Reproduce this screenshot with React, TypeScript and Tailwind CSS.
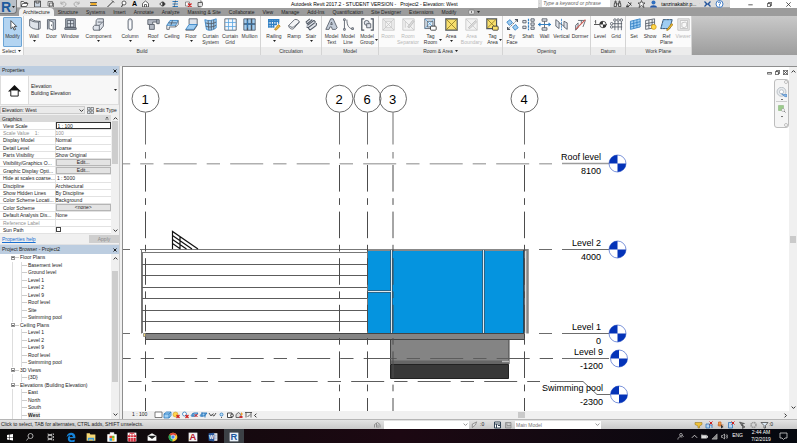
import { ReactNode, useState } from 'react'
import { clsx } from 'clsx'

const tabs = [
  'Architecture', 'Structure', 'Systems', 'Insert', 'Annotate', 'Analyze', 'Massing & Site', 'Collaborate',
  'View', 'Manage', 'Add-Ins', 'Quantification', 'Site Designer', 'Extensions', 'Modify',
]

const INK = '#4d5560'
const FILL = '#dfe3ea'
const BLUE = '#2f7fc4'
const SKY = '#9fcdf2'

// all ribbon icons live on a 16x16 grid
const icons: Record<string, ReactNode> = {
  modify: <path d="M6 2v10l2.4-2.2L10 13.6l1.8-.8-1.7-3.6h3z" fill="#fff" stroke="#333" />,
  wall: <path d="M2 2c4 3 7 3 11 3v9C8 14 5 13 2 10zM2 2l2-1c4 3 7 3 11 3v9l-2 1M13 5l2-1" fill={FILL} stroke={INK} />,
  door: (
    <>
      <path d="M3 14V2h10v12h-2" fill="#b9c0c9" stroke={INK} />
      <path d="M5 3l5 2v10l-5-2z" fill="#fff" stroke={INK} />
      <path d="M8 8v2" stroke={INK} />
    </>
  ),
  window: (
    <>
      <path d="M2 1h12v11H2zM1 12h14v2H1z" fill="#b4bbc5" stroke={INK} />
      <path d="M4 3h8v8H4zM8 3v8M4 7h8" fill="#d3dae2" stroke={INK} />
    </>
  ),
  component: (
    <>
      <path d="M5 5c0-3 1-4 3-4h6v9l-4 5H2c-1-2-1-5 1-6h2z" fill={FILL} stroke={INK} />
      <path d="M5 9h4l5-5M9 9v6M7 5h5" fill="none" stroke={INK} />
    </>
  ),
  column: (
    <>
      <rect x="5" y="1" width="5" height="14" rx="2.5" fill={FILL} stroke={INK} />
      <path d="M7.5 4v9" stroke="#fff" strokeWidth="2" />
    </>
  ),
  roof: <path d="M1 2h14v5h-3v-2H7v3h2v6H3V8H1zM3 8h4M12 5V2" fill="#b4bac4" stroke={INK} />,
  ceiling: (
    <>
      <path d="M1 9l4-6h10l-3 6z" fill={SKY} stroke={BLUE} />
      <path d="M1 9v5h3v-3h8v-2M15 3v5l-3 3M3 6h10M8 3L6 9" fill="none" stroke={INK} />
    </>
  ),
  floor: (
    <>
      <path d="M5 8V1h10v8" fill={FILL} stroke={INK} />
      <path d="M1 14l4-6h10l-4 6z" fill={SKY} stroke={BLUE} />
      <path d="M1 14v1h10l4-6" fill="none" stroke={INK} />
    </>
  ),
  curtainSystem: (
    <>
      <path d="M1 2c5 2 9 1 14-1v11c-4 3-8 4-12 2z" fill={SKY} stroke={BLUE} />
      <path d="M2 6c5 2 9 1 13-1M2 10c5 2 9 1 13-1M5 3l1 12M9 3v12M12 2v12" fill="none" stroke={INK} />
    </>
  ),
  curtainGrid: (
    <>
      <path d="M1 1h14v14H1z" fill="#f4f8fc" stroke={INK} />
      <path d="M5.5 1v14M10.5 1v14M1 5.5h14M1 10.5h14" stroke="#5aa5e0" />
    </>
  ),
  mullion: (
    <>
      <path d="M1 1h14v14H1z" fill={SKY} stroke={INK} />
      <path d="M5.5 1v14M10.5 1v14M1 7.5h14" stroke={INK} strokeWidth="1.8" />
      <path d="M5.5 3v9M2 7.5h12" stroke={BLUE} />
    </>
  ),
  railing: (
    <>
      <path d="M0 2h14M0 4h14M1 2v10M4 2v10M7 2v10M10 2v7M13 2v5M0 8h11M0 11h8" stroke={BLUE} strokeWidth="1.6" />
      <path d="M8 14l5-6 2 2-5 5z" fill="#f0b93a" stroke="#b37a12" />
    </>
  ),
  ramp: (
    <>
      <path d="M1 9l7-7c2-1 6 1 6 3l-7 8c-2 2-7-1-6-4z" fill="#f3f4f6" stroke={INK} />
      <path d="M1 9c1 2 4 3 6 2l7-6" fill="none" stroke={INK} />
    </>
  ),
  stair: (
    <>
      <path d="M2 5l6-4 6 5-2 6-5 3-6-4z" fill={FILL} stroke="none" />
      <path d="M1 5l5-4M1 5l2 2 6-5M3 9l8-6M2 11l2 1 9-7M6 15l8-6M4 12l2 3M11 3l2 2M14 6v3" stroke={INK} strokeWidth="1.3" fill="none" />
    </>
  ),
  modelText: (
    <>
      <path d="M1 14L7 1h3l5 11-2 2H9l-1-3H6l-1 3z" fill="#c3ccd8" stroke={INK} />
      <path d="M7 8l1-3 1 3z" fill="#fff" stroke={INK} />
    </>
  ),
  modelLine: (
    <>
      <path d="M3 3v10M6 2c0 8 3 11 8 12" fill="none" stroke={INK} />
      <path d="M2 1h2v2H2zM2 13h2v2H2zM12 12h2v2h-2z" fill="#fff" stroke={INK} />
    </>
  ),
  modelGroup: (
    <>
      <path d="M4 1H1v14h3M12 1h3v14h-3" fill="none" stroke={INK} strokeWidth="1.5" />
      <circle cx="7" cy="6" r="3" fill={FILL} stroke={INK} />
      <path d="M7 7h5v5H7z" fill={FILL} stroke={INK} />
    </>
  ),
  room: <path d="M1 1h14v14H1zM1 1l14 14M15 1L1 15M4 4h8v8H4z" fill="#f2f2f2" stroke="#c6c6c6" />,
  roomSeparator: (
    <>
      <path d="M1 1h14v14H1zM1 1l14 14M4 4v8" fill="#f2f2f2" stroke="#c6c6c6" />
      <path d="M7 11l6-8 2 1-6 8z" fill="#ddd" stroke="#bbb" />
    </>
  ),
  tagRoom: (
    <>
      <path d="M1 1h12v12H1z" fill="#e6f1fa" stroke={INK} />
      <path d="M1 1l12 12M13 1L1 13" stroke="#5aa5e0" />
      <path d="M4 4h7v7H4z" fill="none" stroke={INK} />
      <rect x="8" y="10" width="7" height="5" rx="1" fill="#fff" stroke="#333" />
    </>
  ),
  area: (
    <>
      <path d="M1 1h14v14H1z" fill="#f8df6c" stroke={INK} strokeWidth="1.4" />
      <path d="M1 1l14 14M15 1L1 15" stroke="#8c7a24" />
    </>
  ),
  areaBoundary: (
    <>
      <path d="M1 1h14v14H1zM1 1l14 14" fill="#f2f2f2" stroke="#c6c6c6" />
      <path d="M4 12l9-9 1 2-8 8z" fill="#ddd" stroke="#bbb" />
    </>
  ),
  tagArea: (
    <>
      <path d="M1 1h12v12H1z" fill="#f8df6c" stroke={INK} strokeWidth="1.4" />
      <path d="M1 1l12 12M13 1L1 13" stroke="#8c7a24" />
      <rect x="8" y="10" width="7" height="5" rx="1" fill="#f8df6c" stroke="#333" />
    </>
  ),
  byFace: (
    <>
      <path d="M2 14L14 2" stroke={INK} strokeDasharray="2 1" />
      <path d="M1 5l4-3 3 4-4 3zM8 11l4-3 3 4-4 3z" fill={SKY} stroke={BLUE} />
      <path d="M11 2h3v3M2 11v3h3" fill="none" stroke={INK} strokeWidth="1.5" />
    </>
  ),
  shaft: (
    <>
      <path d="M1 3h4v3H1zM1 10h4v3H1zM11 1h4v3h-4zM11 6h4v3h-4zM11 11h4v3h-4z" fill={FILL} stroke={INK} />
      <path d="M8 1v14" stroke={BLUE} strokeWidth="1.5" strokeDasharray="3 1" />
    </>
  ),
  wallOpening: (
    <>
      <path d="M5 1h6v3H5zM5 12h6v3H5z" fill={FILL} stroke={INK} />
      <path d="M8 4v8" stroke={INK} />
      <path d="M0 8h16M3 6L1 8l2 2M13 6l2 2-2 2" fill="none" stroke={BLUE} strokeWidth="1.4" />
    </>
  ),
  vertical: (
    <>
      <path d="M1 2l4 3v8l-4-3zM11 4l4 2v8l-4-3z" fill={FILL} stroke={INK} />
      <path d="M8 1v14" stroke={BLUE} strokeDasharray="3 1" />
      <path d="M5 6l6 4" stroke={INK} />
    </>
  ),
  dormer: (
    <>
      <path d="M2 15V9l3-3v6z" fill={FILL} stroke={INK} />
      <path d="M5 3h9l-3 8M9 3v4" fill="none" stroke={INK} />
      <path d="M2 14L14 2" stroke="#cf5b52" strokeWidth="1.3" />
    </>
  ),
  level: (
    <>
      <path d="M0 8h16M2 3v4M1 4l1-1" stroke="#333" fill="none" />
      <circle cx="11" cy="8" r="4" fill="#fff" stroke="#333" />
      <path d="M11 8V4a4 4 0 0 0-4 4zM11 8v4a4 4 0 0 0 4-4z" fill="#333" />
    </>
  ),
  grid: (
    <>
      <path d="M6 4v11M10 4v11M14 4v11M3 7h12M3 11h12" stroke={INK} />
      <circle cx="6" cy="2.5" r="1.5" fill="#fff" stroke={INK} />
      <circle cx="10" cy="2.5" r="1.5" fill="#fff" stroke={INK} />
      <circle cx="14" cy="2.5" r="1.5" fill="#fff" stroke={INK} />
      <circle cx="2" cy="7" r="1.5" fill="#fff" stroke={INK} />
      <circle cx="2" cy="11" r="1.5" fill="#fff" stroke={INK} />
    </>
  ),
  set: (
    <>
      <path d="M3 4l12-3v10L3 14z" fill={SKY} stroke={BLUE} />
      <path d="M7 3v10M11 2v10M3 7.5l12-3M3 11l12-3" stroke={BLUE} />
    </>
  ),
  show: (
    <>
      <path d="M2 3l11-2v11L2 14z" fill="#f4f6f8" stroke={INK} />
      <path d="M6 2v11M10 2v11M2 7l11-2M2 10l11-2" stroke={INK} />
      <circle cx="12" cy="11" r="3" fill="#ffd94d" stroke="#d39a16" />
    </>
  ),
  refPlane: (
    <>
      <path d="M4 2h11l-3 11H1z" fill={SKY} stroke={BLUE} />
      <path d="M4 2h11l-3 11H1z" fill="none" stroke={INK} strokeDasharray="3 1" />
      <path d="M8 15l6-8 2 1-6 7z" fill="#f0c23a" stroke="#a97b15" />
    </>
  ),
  viewer: (
    <>
      <path d="M1 1h14v14H1z" fill="#ececec" stroke="#bdbdbd" />
      <path d="M4 3h9v10H4zM6 6l4-1 2 1v4l-3 2-3-1z" fill="#f8f8f8" stroke="#bdbdbd" />
    </>
  ),
}

type Tool = { icon: string; label: string; sub?: string; width: string; arrow?: boolean; off?: boolean }
type Panel = { name: string; arrow?: boolean; pad: string; tools: Tool[] }

const panels: Panel[] = [
  {
    name: 'Build', pad: 'pl-px pr-px',
    tools: [
      { icon: 'wall', label: 'Wall', width: 'w-[18px]', arrow: true },
      { icon: 'door', label: 'Door', width: 'w-[17px]' },
      { icon: 'window', label: 'Window', width: 'w-[20px]' },
      { icon: 'component', label: 'Component', width: 'w-[37px]', arrow: true },
      { icon: 'column', label: 'Column', width: 'w-[26px]', arrow: true },
      { icon: 'roof', label: 'Roof', width: 'w-[20px]', arrow: true },
      { icon: 'ceiling', label: 'Ceiling', width: 'w-[18px]' },
      { icon: 'floor', label: 'Floor', width: 'w-[20px]', arrow: true },
      { icon: 'curtainSystem', label: 'Curtain', sub: 'System', width: 'w-[19px]' },
      { icon: 'curtainGrid', label: 'Curtain', sub: 'Grid', width: 'w-[20px]' },
      { icon: 'mullion', label: 'Mullion', width: 'w-[19px]' },
    ],
  },
  {
    name: 'Circulation', pad: 'pl-[2px] pr-[2px]',
    tools: [
      { icon: 'railing', label: 'Railing', width: 'w-[22px]', arrow: true },
      { icon: 'ramp', label: 'Ramp', width: 'w-[18px]' },
      { icon: 'stair', label: 'Stair', width: 'w-[16px]', arrow: true },
    ],
  },
  {
    name: 'Model', pad: 'pl-px',
    tools: [
      { icon: 'modelText', label: 'Model', sub: 'Text', width: 'w-[17px]' },
      { icon: 'modelLine', label: 'Model', sub: 'Line', width: 'w-[16px]' },
      { icon: 'modelGroup', label: 'Model', sub: 'Group', width: 'w-[22px]', arrow: true },
    ],
  },
  {
    name: 'Room & Area', arrow: true, pad: 'pl-0',
    tools: [
      { icon: 'room', label: 'Room', width: 'w-[18px]', off: true },
      { icon: 'roomSeparator', label: 'Room', sub: 'Separator', width: 'w-[22px]', off: true },
      { icon: 'tagRoom', label: 'Tag', sub: 'Room', width: 'w-[23px]', arrow: true },
      { icon: 'area', label: 'Area', width: 'w-[18px]', arrow: true },
      { icon: 'areaBoundary', label: 'Area', sub: 'Boundary', width: 'w-[23px]', off: true },
      { icon: 'tagArea', label: 'Tag', sub: 'Area', width: 'w-[19px]', arrow: true },
    ],
  },
  {
    name: 'Opening', pad: 'pl-px',
    tools: [
      { icon: 'byFace', label: 'By', sub: 'Face', width: 'w-[16px]' },
      { icon: 'shaft', label: 'Shaft', width: 'w-[16px]' },
      { icon: 'wallOpening', label: 'Wall', width: 'w-[17px]' },
      { icon: 'vertical', label: 'Vertical', width: 'w-[17px]' },
      { icon: 'dormer', label: 'Dormer', width: 'w-[20px]' },
    ],
  },
  {
    name: 'Datum', pad: 'pl-px pr-px',
    tools: [
      { icon: 'level', label: 'Level', width: 'w-[16px]' },
      { icon: 'grid', label: 'Grid', width: 'w-[16px]' },
    ],
  },
  {
    name: 'Work Plane', pad: 'pl-0',
    tools: [
      { icon: 'set', label: 'Set', width: 'w-[16px]' },
      { icon: 'show', label: 'Show', width: 'w-[16px]' },
      { icon: 'refPlane', label: 'Ref', sub: 'Plane', width: 'w-[17px]' },
      { icon: 'viewer', label: 'Viewer', width: 'w-[16px]', off: true },
    ],
  },
]

type PropRow = { name: string; value: string; kind?: 'input' | 'button' | 'check'; off?: boolean }

const propRows: PropRow[] = [
  { name: 'View Scale', value: '1 : 100', kind: 'input' },
  { name: 'Scale Value    1:', value: '100', off: true },
  { name: 'Display Model', value: 'Normal' },
  { name: 'Detail Level', value: 'Coarse' },
  { name: 'Parts Visibility', value: 'Show Original' },
  { name: 'Visibility/Graphics O...', value: 'Edit...', kind: 'button' },
  { name: 'Graphic Display Opti...', value: 'Edit...', kind: 'button' },
  { name: 'Hide at scales coarse...', value: ' 1 : 5000' },
  { name: 'Discipline', value: 'Architectural' },
  { name: 'Show Hidden Lines', value: 'By Discipline' },
  { name: 'Color Scheme Locati...', value: 'Background' },
  { name: 'Color Scheme', value: '<none>', kind: 'button' },
  { name: 'Default Analysis Dis...', value: 'None' },
  { name: 'Reference Label', value: '', off: true },
  { name: 'Sun Path', value: '', kind: 'check' },
]

const tree = [
  { name: 'Floor Plans', views: ['Basement level', 'Ground level', 'Level 1', 'Level 2', 'Level 9', 'Roof level', 'Site', 'Swimming pool'] },
  { name: 'Ceiling Plans', views: ['Level 1', 'Level 2', 'Level 9', 'Roof level', 'Swimming pool'] },
  { name: '3D Views', views: ['{3D}'] },
  { name: 'Elevations (Building Elevation)', views: ['East', 'North', 'South', 'West'] },
]

const Caret = ({ className = 'w-[3px]' }: { className?: string }) => (
  <svg viewBox="0 0 6 4" className={className} aria-hidden="true">
    <path d="M0 0h6L3 4z" fill="#222" />
  </svg>
)

const Chevron = ({ turn = 'rotate-0' }: { turn?: string }) => (
  <svg viewBox="0 0 8 8" className={clsx('w-[5px] h-[5px]', turn)} aria-hidden="true">
    <path d="M1 2.5l3 3 3-3" fill="none" stroke="#333" strokeWidth="1.6" />
  </svg>
)

const Small = ({ children, className = 'w-[9px] h-[8px]' }: { children: ReactNode; className?: string }) => (
  <svg viewBox="0 0 16 16" className={clsx('shrink-0', className)} aria-hidden="true">
    {children}
  </svg>
)

const TitleBar = () => (
  <header className="flex h-[8px] items-center bg-white text-black">
    <div className="flex h-full w-[203px] shrink-0 items-center gap-[4px] overflow-hidden rounded-r-sm border-b border-[#b5b5b5] bg-[#e2e2e2] pl-[20px]">
      <Small><path d="M1 13V3h5l1 2h6v2M1 13l3-6h11l-3 6z" fill="#fff" stroke="#333" strokeWidth="1.5" /></Small>
      <Small><path d="M2 2h12v12H2zM5 2v4h6V2" fill="#c9d3de" stroke="#333" strokeWidth="1.5" /></Small>
      <Small><path d="M3 3h9v9H3zM6 6h8v8H6z" fill="#e9e9e9" stroke="#555" strokeWidth="1.5" /></Small>
      <Small><path d="M3 8c2-5 9-5 10 0 0 4-4 5-6 5M3 3v5h5" fill="none" stroke="#aaa" strokeWidth="2" /></Small>
      <Small><path d="M13 8c-2-5-9-5-10 0 0 4 4 5 6 5M13 3v5H8" fill="none" stroke="#aaa" strokeWidth="2" /></Small>
      <span className="h-[6px] w-px bg-[#aaa]" />
      <Small><path d="M1 5h14M1 11h14" stroke="#333" strokeWidth="1.5" /><path d="M2 6h12v4H2z" fill="#edab28" /></Small>
      <Caret />
      <Small><path d="M2 14L13 3M11 1l4 4" stroke="#333" strokeWidth="2" /></Small>
      <Small><path d="M4 14l3-6" stroke="#333" strokeWidth="2" /><circle cx="9" cy="6" r="4" fill="#fff" stroke="#333" strokeWidth="1.5" /></Small>
      <b className="text-[7px] leading-[8px]">A</b>
      <Small><path d="M2 7l6-5 6 5v7H2zM6 14V9h4v5" fill="#fff" stroke="#333" strokeWidth="1.5" /></Small>
      <Caret />
      <Small><circle cx="8" cy="8" r="4" fill="#fff" stroke="#333" strokeWidth="1.5" /><path d="M8 4v8a4 4 0 0 0 0-8M1 8h3M12 8h3" fill="#333" stroke="#333" /></Small>
      <Small><path d="M2 3h11M2 8h11M2 13h11" stroke={BLUE} strokeWidth="2" /><path d="M8 1L5 15" stroke="#333" /></Small>
      <Small><path d="M2 4h8v8H2z" fill="#fff" stroke="#333" /><path d="M7 7l7 7M14 7l-7 7" stroke="#d02020" strokeWidth="2.5" /></Small>
      <Small><path d="M1 5h9v8H1zM5 2h9v8" fill="none" stroke="#333" strokeWidth="1.5" /></Small>
    </div>
    <h1 className="ml-[88px] flex w-[247px] shrink-0 gap-[4px] text-[5px] leading-[5px] whitespace-nowrap">
      <span>Autodesk Revit 2017.2 - STUDENT VERSION -</span>
      <span>Project2 - Elevation: West</span>
    </h1>
    <div className="flex h-full w-[192px] shrink-0 items-center gap-[3px] border-b border-[#aaa] bg-[#dcdcdc] pr-[3px] text-[5px]">
      <svg viewBox="0 0 4 6" className="ml-px w-[3px]" aria-hidden="true"><path d="M0 0l4 3-4 3z" fill="#222" /></svg>
      <input
        aria-label="Search help"
        placeholder="Type a keyword or phrase"
        className="h-[7px] w-[73px] bg-white pl-px text-[5px] italic placeholder:text-[#666]"
      />
      <Small><path d="M2 6h4v7H1zM10 6h4l1 7h-5zM6 8h4M3 6V2h2v4M11 6V2h2v4" fill="#ddd" stroke="#333" strokeWidth="1.5" /></Small>
      <Small><path d="M3 13c3-1 8-2 8-8M5 4l7 7M4 9l-2 5 5-1" fill="none" stroke="#333" strokeWidth="1.8" /></Small>
      <Small><path d="M8 1l2 5h5l-4 3 2 6-5-4-5 4 2-6-4-3h5z" fill="#fff" stroke="#333" strokeWidth="1.5" /></Small>
      <Small><circle cx="8" cy="5" r="4" fill="#2f6fc0" /><path d="M1 15c0-6 14-6 14 0z" fill="#2457a8" /></Small>
      <span className="leading-[6px]">tanzinakabir.p...</span>
      <Caret />
      <Small><path d="M2 3l5 5-5 5M14 3L9 8l5 5M4 8h8" fill="none" stroke="#24559c" strokeWidth="2.5" /></Small>
      <Small>
        <circle cx="8" cy="8" r="7" fill="#fff" stroke="#2f6fc0" strokeWidth="1.8" />
        <path d="M6 6c0-3 4-3 4 0 0 2-2 1-2 4M8 11v2" fill="none" stroke="#2f6fc0" strokeWidth="2" />
      </Small>
      <Caret />
    </div>
    <div className="ml-auto flex items-center gap-[14px] pr-[6px]">
      <button aria-label="Minimize"><Small className="w-[5px] h-[5px]"><path d="M1 9h14" stroke="#333" strokeWidth="2.5" /></Small></button>
      <button aria-label="Restore"><Small className="w-[5px] h-[5px]"><path d="M1 5h10v10H1zM5 5V1h10v10h-4" fill="none" stroke="#333" strokeWidth="2.5" /></Small></button>
      <button aria-label="Close"><Small className="w-[5px] h-[5px]"><path d="M1 1l14 14M15 1L1 15" stroke="#333" strokeWidth="2.5" /></Small></button>
    </div>
  </header>
)

const RibbonTool = ({ tool }: { tool: Tool }) => (
  <button
    disabled={tool.off}
    className={clsx('relative flex flex-col items-center pt-[2px] whitespace-nowrap', tool.width, tool.off ? 'text-[#b9b9b9]' : 'text-[#333]')}
  >
    <svg viewBox="0 0 16 16" className="h-[13px] w-[13px]" aria-hidden="true">{icons[tool.icon]}</svg>
    <span className="mt-[2px] leading-[6px]">{tool.label}</span>
    {tool.sub && <span className="leading-[6px]">{tool.sub}</span>}
    {tool.arrow && (
      <Caret className={clsx('absolute w-[3px]', tool.sub ? 'right-0 top-[23px]' : 'top-[24px]')} />
    )}
  </button>
)

const Ribbon = () => {
  const [active, setActive] = useState('Architecture')

  return (
    <>
      <nav className="flex h-[8px] bg-[#9c9c9c] pl-[19px] text-[5px] leading-[8px] text-[#222]">
        {tabs.map((tab) => (
          <button
            key={tab}
            onClick={() => setActive(tab)}
            className={clsx('px-[4px] whitespace-nowrap', active === tab && 'rounded-t-sm bg-[#f2f2f2]')}
          >
            {tab}
          </button>
        ))}
        <button aria-label="Ribbon display" className="ml-[8px] flex items-center gap-[2px]">
          <Small className="w-[7px] h-[6px]"><rect x="1" y="3" width="14" height="10" rx="2" fill="#eee" stroke="#444" /><circle cx="8" cy="8" r="2" fill="#333" /></Small>
          <Caret />
        </button>
      </nav>
      <section className="flex h-[39px] bg-linear-to-b from-[#c9c9c9] to-[#9d9d9d] text-[5px]">
        <div className="flex w-[24px] shrink-0 flex-col border-r border-[#d4d4d4] bg-[#fbfbfb]">
          <button className="mt-px ml-[3px] flex h-[30px] w-[19px] flex-col items-center rounded-[1px] border border-[#6ba4d6] bg-[#b3d4f1] pt-px text-[#333]">
            <svg viewBox="0 0 16 16" className="h-[13px] w-[13px]" aria-hidden="true">{icons.modify}</svg>
            <span className="mt-px leading-[6px]">Modify</span>
          </button>
          <button className="flex flex-1 items-center justify-center gap-[2px] leading-[6px] text-[#333]">
            Select <Caret />
          </button>
        </div>
        {panels.map((panel) => (
          <div key={panel.name} className="flex shrink-0 flex-col border-r border-[#d4d4d4] bg-[#fbfbfb]">
            <div className={clsx('flex flex-1', panel.pad)}>
              {panel.tools.map((tool) => <RibbonTool key={tool.icon} tool={tool} />)}
            </div>
            <div className="flex h-[8px] items-center justify-center gap-[2px] bg-[#ececec] leading-[6px] text-[#333]">
              {panel.name}
              {panel.arrow && <Caret />}
            </div>
          </div>
        ))}
      </section>
    </>
  )
}

const DockHeader = ({ title }: { title: string }) => (
  <div className="flex h-[9px] shrink-0 items-center justify-between bg-[#bccde0] px-[2px] leading-[9px] text-[#222]">
    <h2>{title}</h2>
    <button aria-label={`Close ${title}`}>
      <Small className="w-[4px] h-[4px]"><path d="M2 2l12 12M14 2L2 14" stroke="#000" strokeWidth="3.5" /></Small>
    </button>
  </div>
)

const PropertyValue = ({ row }: { row: PropRow }) => {
  if (row.kind === 'input') {
    return <input aria-label={row.name} defaultValue={row.value} className="block h-[7px] w-full border border-[#333] pl-px leading-[5px]" />
  }
  if (row.kind === 'button') {
    return <button className="block h-[7px] w-full border border-[#b5b5b5] bg-[#e3e3e3] leading-[5px]">{row.value}</button>
  }
  if (row.kind === 'check') {
    return <input type="checkbox" aria-label={row.name} className="block h-[5px] w-[5px] appearance-none border border-[#444]" />
  }
  return <span className="whitespace-pre">{row.value}</span>
}

const Properties = () => (
  <section className="flex h-[178px] shrink-0 flex-col bg-[#f0f0f0]">
    <DockHeader title="Properties" />
    <button className="flex h-[30px] shrink-0 items-center border border-[#ddd] bg-[#f7f7f7] text-left">
      <span className="flex h-[28px] w-[28px] items-center justify-center border-r border-[#ddd] bg-white">
        <svg viewBox="0 0 14 14" className="h-[13px] w-[13px]" aria-hidden="true">
          <path d="M0 8l7-7 7 7z" fill="#111" />
          <path d="M3 7v6h8V7" fill="#fff" stroke="#111" />
        </svg>
      </span>
      <span className="ml-[2px] flex-1 leading-[7px]">
        <span className="block">Elevation</span>
        <span className="block">Building Elevation</span>
      </span>
      <span className="mr-px"><Caret /></span>
    </button>
    <div className="flex h-[10px] shrink-0 items-center">
      <div className="relative flex w-[85px] items-center">
        <select aria-label="Element" className="h-[8px] w-full appearance-none border border-[#ccc] bg-[#eaeaea] pl-px leading-[6px]">
          <option>Elevation: West</option>
        </select>
        <span className="absolute right-px"><Chevron /></span>
      </div>
      <button className="ml-[2px] flex items-center gap-[2px] whitespace-nowrap">
        <Small className="w-[7px] h-[7px]"><path d="M1 1h6v6H1zM9 1h6v6H9zM1 9h6v6H1zM9 9h6v6H9z" fill="#dfe9f3" stroke="#555" strokeWidth="1.5" /></Small>
        Edit Type
      </button>
    </div>
    <div className="flex h-[119px] shrink-0 overflow-hidden">
      <div className="flex min-w-0 flex-1 flex-col">
        <h3 className="flex h-[7px] shrink-0 items-center justify-between bg-[#d9d9d9] px-[2px]">
          Graphics
          <Small className="w-[4px] h-[5px]"><path d="M3 7l5-5 5 5M3 13l5-5 5 5" fill="none" stroke="#222" strokeWidth="2.5" /></Small>
        </h3>
        <table className="h-[112px] w-full table-fixed border-collapse bg-white leading-[6px]">
          <tbody>
            {propRows.map((row) => (
              <tr key={row.name} className={row.off ? 'text-[#909090]' : 'text-[#222]'}>
                <th scope="row" className="w-[55px] border-r border-b border-[#e2e2e2] p-0 pl-[3px] text-left font-normal whitespace-pre">{row.name}</th>
                <td className="border-b border-[#e2e2e2] p-0"><PropertyValue row={row} /></td>
              </tr>
            ))}
          </tbody>
        </table>
      </div>
      <div className="flex w-[8px] flex-col items-center bg-[#f0f0f0] py-px">
        <Chevron turn="rotate-180" />
        <span className="h-[43px] w-[6px] bg-[#cdcdcd]" />
        <span className="mt-auto"><Chevron /></span>
      </div>
    </div>
    <div className="flex flex-1 items-center justify-between">
      <a href="#help" className="pl-[2px] text-[#1a6fd0] underline">Properties help</a>
      <button disabled className="h-[8px] w-[30px] bg-[#cfcfcf] text-[#8a8a8a]">Apply</button>
    </div>
  </section>
)

const ProjectBrowser = () => (
  <section className="flex min-h-0 flex-1 flex-col bg-white">
    <DockHeader title="Project Browser - Project2" />
    <div className="flex min-h-0 flex-1">
      <ul className="flex flex-1 flex-col overflow-hidden pl-[11px] leading-[7px] text-[#222]">
        {tree.map((group) => (
          <li key={group.name} className="contents">
            <span className="flex min-h-0 flex-1 items-center whitespace-nowrap">
              <span className="flex h-[4px] w-[4px] items-center justify-center border border-[#999] bg-white">
                <span className="h-px w-[2px] bg-[#666]" />
              </span>
              <span className="mr-px h-px w-[4px] bg-[#ccc]" />
              {group.name}
            </span>
            {group.views.map((view) => (
              <span key={view} className="flex min-h-0 flex-1 items-center whitespace-nowrap">
                <span className="ml-px h-full w-[9px] border-l border-[#ddd]" />
                <span className="flex h-full w-[7px] items-center border-l border-[#ddd]">
                  <span className="h-px w-[5px] bg-[#ccc]" />
                </span>
                <span className={clsx(view === 'West' && 'bg-[#ececec] font-bold')}>{view}</span>
              </span>
            ))}
          </li>
        ))}
      </ul>
      <div className="flex w-[8px] flex-col items-center bg-[#f0f0f0] py-[2px]">
        <Chevron turn="rotate-180" />
        <span className="mt-[10px] h-[111px] w-[6px] bg-[#cdcdcd]" />
        <span className="mt-auto"><Chevron /></span>
      </div>
    </div>
  </section>
)

const grids = [
  { x: 145.5, name: '1' },
  { x: 339.5, name: '2' },
  { x: 367.5, name: '6' },
  { x: 393, name: '3' },
  { x: 524.5, name: '4' },
]

const levels = [
  { name: 'Roof level', height: '8100', y: 163.5, head: 617.5, text: 601, wide: true },
  { name: 'Level 2', height: '4000', y: 249.5, head: 617.5, text: 601 },
  { name: 'Level 1', height: '0', y: 333.5, head: 617.5, text: 601 },
  { name: 'Level 9', height: '-1200', y: 358.5, head: 619, text: 603 },
  { name: 'Swimming pool', height: '-2300', y: 394.5, head: 619, text: 603 },
]

const Elevation = () => (
  <svg viewBox="123 67 666 344" preserveAspectRatio="xMinYMin meet" className="block w-full bg-white" role="img" aria-label="West elevation">
    {/* left wing with cladding */}
    <path d="M141.5 249.5V333.5M142.5 252v81M140 249.5H368M142 252.5H368" stroke="#777" fill="none" />
    <path d="M142 264.5H368M142 275.5H368M142 287.5H368M142 298.5H368M142 310.5H368M142 321.5H368" stroke="#5c5c5c" />
    <path d="M172.5 249V231.5L198 249M172.5 235.5L192 249M172.5 239.5L186.5 249M172.5 243.5L180.5 249M180 237V249" stroke="#111" strokeWidth="1.2" fill="none" />

    {/* slab and pool */}
    <path d="M390.5 339H509V364H390.5z" fill="#848484" stroke="#444" />
    <path d="M391 360.5h118v3.5H391z" fill="#666" />
    <path d="M502 361.5h7" stroke="#bbb" strokeWidth="1.5" />
    <path d="M390.5 364.5H508.5V378.5H390.5z" fill="#383838" stroke="#222" />
    <path d="M145.5 333.5H524.5V339.5H145.5z" fill="#848484" stroke="#444" />
    <path d="M143.5 333.5h2v3h-2z" fill="#f5d97a" stroke="#777" strokeWidth=".7" />

    {/* glazing */}
    <path d="M368 251H524V333H368z" fill="#0594df" />
    <path d="M368 250H528" stroke="#888" strokeWidth="2" />
    <path d="M390.5 250V333M392.5 250V333M482.5 250V333M484.5 250V333M368 290.5H391M368 292.5H391" stroke="#2f5874" strokeWidth=".8" />
    <path d="M391.5 250V333M483.5 250V333M368 291.5H391" stroke="#dfe8ec" />
    <path d="M367.5 250V333" stroke="#777" />
    <path d="M524 250V333" stroke="#26323c" strokeWidth="1.5" />
    <path d="M527.5 249V333.5" stroke="#858585" strokeWidth="2.5" />
    <path d="M525.5 251V333" stroke="#ddd" />

    {/* level lines */}
    <path d="M97.2 163.7H552" stroke="#b0b0b0" strokeWidth="1.6" strokeDasharray="33 10 13.3 10.2" />
    <path d="M97.7 358.5H553" stroke="#5c5c5c" strokeDasharray="33 10 13.3 10.2" />
    <path d="M85.2 381.5H540" stroke="#5c5c5c" strokeDasharray="33 10 13.3 10.2" />
    <path d="M123 249.5h7M539 249.5h13M123 333.5h7M539 333.5h13M550 381.5h33L597 394.5" stroke="#6c6c6c" fill="none" />

    {/* grids */}
    {grids.map((grid) => (
      <g key={grid.name}>
        <path d={`M${grid.x} 112.5V144.5M${grid.x} 152V158.5`} stroke="#6c6c6c" />
        <path d={`M${grid.x} 165V411`} stroke="#4c4c4c" strokeDasharray="26.6 6.6 6.7 6.7" />
        <circle cx={grid.x} cy="98.7" r="13.5" fill="none" stroke="#6c6c6c" />
        <text x={grid.x - 0.5} y="103.5" textAnchor="middle" fontSize="13" fill="#000">{grid.name}</text>
      </g>
    ))}

    {levels.map((level) => (
      <g key={level.name} fontSize="9" fill="#000">
        <path
          d={level.name === 'Swimming pool' ? `M597 ${level.y}H611` : `M562 ${level.y}H609`}
          stroke={level.wide ? '#9c9c9c' : '#6c6c6c'}
          strokeWidth={level.wide ? 1.5 : 1}
        />
        <circle cx={level.head} cy={level.y} r="8.5" fill="#fff" stroke="#5a78d0" strokeWidth=".8" />
        <path
          d={`M${level.head} ${level.y}v-8.5a8.5 8.5 0 0 0-8.5 8.5zM${level.head} ${level.y}v8.5a8.5 8.5 0 0 0 8.5-8.5z`}
          fill="#0433b8"
        />
        <text x={level.text} y={level.y - 4} textAnchor="end">{level.name}</text>
        <text x={level.text} y={level.y + 10.5} textAnchor="end">{level.height}</text>
      </g>
    ))}
  </svg>
)

const ViewControls = () => (
  <div className="flex h-[8px] shrink-0 items-center bg-[#f0f0f0] pl-[9px] text-[5px] text-[#222]">
    <span className="w-[22px]">1 : 100</span>
    <div className="flex items-center">
      <Small><path d="M1 2h14v11H1z" fill="#fff" stroke="#555" strokeWidth="1.5" /></Small>
      <Small><path d="M1 6l5-4h9v7l-4 5H1zM1 6h10v8M11 6l4-4" fill="#9fd0f5" stroke="#2473b8" strokeWidth="1.5" /></Small>
      <Small><circle cx="6" cy="7" r="5" fill="#ffd44d" stroke="#b88b1a" /><path d="M8 8l6 6M14 8l-6 6" stroke="#d02020" strokeWidth="2.5" /></Small>
      <Small><circle cx="6" cy="6" r="4" fill="#fff" stroke="#2473b8" strokeWidth="1.5" /><path d="M8 8l6 6M14 8l-6 6" stroke="#d02020" strokeWidth="2.5" /></Small>
      <Small><path d="M1 9l5-5h9l-5 6H1M5 4v8" fill="#9fd0f5" stroke="#2473b8" strokeWidth="1.8" /><path d="M8 6l6 6M14 6l-6 6" stroke="#d02020" strokeWidth="2" /></Small>
      <Small><path d="M1 9l5-5h9l-5 6H1M5 2v10M11 4v9" fill="#9fd0f5" stroke="#2473b8" strokeWidth="1.8" /></Small>
      <Small><path d="M1 4l4 6 3-4M15 4l-4 6c-3 0-4-4-1-5" fill="none" stroke="#444" strokeWidth="1.8" /></Small>
      <Small><circle cx="8" cy="7" r="3" fill="#bfe2fb" stroke="#2473b8" strokeWidth="1.5" /><path d="M7 12h2v2H7z" fill="#555" /></Small>
      <Small><path d="M2 4h9v9H2z" fill="#fff" stroke="#333" strokeWidth="1.8" /><circle cx="11" cy="9" r="3" fill="#ccc" stroke="#333" strokeWidth="1.5" /></Small>
      <Small><path d="M1 7l5-4 5 4v6H1z" fill="#ddd" stroke="#444" strokeWidth="1.5" /><path d="M11 2l4 4-4 4z" fill="#f0a030" /><path d="M8 10h6v4H8z" fill="#c33" /></Small>
      <Small><path d="M1 3h14M3 3v10M13 3v10M6 12l5-5" fill="none" stroke="#333" strokeWidth="1.5" /></Small>
      <Chevron turn="rotate-90" />
    </div>
    <span className="ml-[260px] h-[6px] w-[7px] bg-[#cacaca]" />
    <span className="mr-[9px] ml-auto"><Chevron turn="-rotate-90" /></span>
  </div>
)

const Canvas = () => (
  <main className="relative flex min-w-0 flex-1 flex-col border-t border-l border-[#8e8e8e] bg-white">
    <div className="flex min-h-0 flex-1 overflow-hidden">
      <div className="min-w-0 flex-1"><Elevation /></div>
      <div className="flex w-[8px] shrink-0 flex-col items-center bg-[#f0f0f0] pt-[2px] pb-px">
        <Chevron turn="rotate-180" />
        <span className="mt-[162px] h-[7px] w-[6px] bg-[#cacaca]" />
        <span className="mt-auto"><Chevron /></span>
      </div>
    </div>
    <ViewControls />
    <div className="absolute top-[3px] right-[9px] flex gap-[3px]">
      <Small className="w-[5px] h-[5px]"><path d="M1 8h14v5H1z" fill="#fff" stroke="#444" strokeWidth="2.5" /></Small>
      <Small className="w-[5px] h-[5px]"><path d="M1 5h10v10H1zM5 5V1h10v10h-4" fill="none" stroke="#333" strokeWidth="2.5" /></Small>
      <Small className="w-[5px] h-[5px]"><path d="M1 1l14 14M15 1L1 15M1 1h14v14H1z" fill="none" stroke="#444" strokeWidth="2.5" /></Small>
    </div>
    <div className="absolute top-[12px] right-[8px] flex h-[49px] w-[15px] flex-col items-center rounded-[3px] border border-[#bdbdbd] bg-[#f5f5f5]">
      <Small className="ml-auto w-[4px] h-[4px]"><circle cx="8" cy="8" r="6" fill="#fff" stroke="#888" strokeWidth="2" /></Small>
      <button aria-label="Steering wheel" className="mt-[3px] flex flex-col items-center gap-px">
        <Small className="w-[11px] h-[11px]">
          <circle cx="8" cy="7" r="6.5" fill="#e8ebee" stroke="#a5adb5" />
          <circle cx="8" cy="7" r="3" fill="#fff" stroke="#a5adb5" />
          <path d="M8 10l5 4h3v-3h-5z" fill="#8db9e8" stroke="#4d86c4" />
        </Small>
        <Caret className="w-[2px]" />
      </button>
      <span className="mt-px h-px w-[11px] bg-[#ccc]" />
      <button aria-label="Zoom region" className="mt-[3px] flex flex-col items-center gap-[3px]">
        <Small className="w-[8px] h-[8px]">
          <path d="M1 1h10v10H1z" fill="#9ccb8c" stroke="#7fae70" />
          <circle cx="10" cy="10" r="3" fill="#fff" stroke="#888" />
          <path d="M12 12l3 3" stroke="#888" strokeWidth="2" />
        </Small>
        <Caret className="w-[2px]" />
      </button>
      <Small className="mt-auto ml-auto w-[4px] h-[4px]"><circle cx="8" cy="8" r="6" fill="#fff" stroke="#888" strokeWidth="2" /></Small>
    </div>
  </main>
)

const StatusBar = () => (
  <div className="flex h-[10px] shrink-0 items-center border-t border-[#b5b5b5] bg-linear-to-b from-[#e3e3e3] to-[#c9c9c9] text-[5px] leading-[7px] text-[#222]">
    <p className="w-[373px] shrink-0 pl-px whitespace-nowrap">Click to select, TAB for alternates, CTRL adds, SHIFT unselects.</p>
    <Small><path d="M2 13V7l6-4 5 4v6M6 4v9M9 7v7" fill="none" stroke="#888" strokeWidth="1.8" /></Small>
    <div className="relative ml-[2px] flex w-[85px] items-center">
      <select aria-label="Workset" className="h-[8px] w-full appearance-none bg-white"><option /></select>
      <span className="absolute right-px opacity-50"><Chevron /></span>
    </div>
    <div className="ml-[2px] flex w-[42px] items-center gap-[2px]">
      <Small className="w-[7px] h-[7px]"><path d="M3 15V7l10-5-3 7z" fill="#ddd" stroke="#777" strokeWidth="1.5" /></Small>
      <span>:0</span>
      <span className="ml-auto" />
      <Small><path d="M2 2h12v12H2zM2 6h12M6 6v8M9 9h4" fill="#fff" stroke="#345" strokeWidth="2" /></Small>
      <Small><path d="M2 3h11v11H2zM5 3v6h8" fill="#bbb" stroke="#888" strokeWidth="1.5" /></Small>
    </div>
    <div className="relative ml-[2px] flex w-[86px] items-center">
      <select aria-label="Design option" className="h-[8px] w-full appearance-none bg-white pl-px leading-[6px] text-[#777]"><option>Main Model</option></select>
      <span className="absolute right-px opacity-50"><Chevron /></span>
    </div>
    <div className="mr-[24px] ml-auto flex items-center gap-[2px]">
      <Small><path d="M1 3h14v4l-5 3v4H7v-4L1 7z" fill="#f0c23a" stroke="#8a6a18" /></Small>
      <Small><path d="M1 6h7v8H1zM8 8h5v6" fill="#b5d6f2" stroke="#2f6fb0" strokeWidth="1.5" /><path d="M8 1l6 6M14 1L8 7" stroke="#d02020" strokeWidth="2" /></Small>
      <Small><path d="M4 2h5v8H4zM2 8h12" fill="#f4a24a" stroke="#c9682a" strokeWidth="1.5" /><path d="M9 7v8l5-3z" fill="#333" /></Small>
      <Small><path d="M2 3h8v11H2z" fill="#b5d6f2" stroke="#2f6fb0" strokeWidth="1.5" /><path d="M8 1l6 6M14 1L8 7" stroke="#d02020" strokeWidth="2" /></Small>
      <Small><path d="M2 2l5 8 1-4 4-1zM8 8v7l5-3z" fill="#777" stroke="#333" /></Small>
      <Small><circle cx="8" cy="8" r="5" fill="none" stroke="#999" strokeWidth="3" strokeDasharray="3 1" /></Small>
      <span className="flex items-center"><Small><path d="M1 3h14L10 9v5H7V9z" fill="#dce9f5" stroke="#444" strokeWidth="1.5" /></Small>:0</span>
    </div>
  </div>
)

const Letter = ({ ch, bg, fg }: { ch: string; bg: string; fg: string }) => (
  <>
    <path d="M1 1h14v14H1z" fill={bg} />
    <text x="8" y="13.5" textAnchor="middle" fontSize="15" fontWeight="bold" fill={fg}>{ch}</text>
  </>
)

const apps: { name: string; icon: ReactNode; active?: boolean }[] = [
  { name: 'Start', icon: <path d="M2 4l5-1v5H2zM8 3l6-1v6H8zM2 9h5v5l-5-1zM8 9h6v6l-6-1z" fill="#fff" /> },
  { name: 'Search', icon: <><circle cx="9" cy="6" r="5" fill="none" stroke="#ddd" strokeWidth="1.5" /><path d="M5 10l-4 5" stroke="#ddd" strokeWidth="1.5" /></> },
  { name: 'Task view', icon: <path d="M2 5h8v6H2zM2 1v2h8V1M2 15v-2h8v2M13 1v3M13 6v4M13 12v3" fill="none" stroke="#ddd" strokeWidth="1.5" /> },
  { name: 'Edge', icon: <path d="M1 8C2-1 15-1 15 8v2H6c0 4 5 4 8 2v3C8 18 2 15 3 10c0-3 3-5 5-5-2 1-2 2-2 3h5c0-5-7-4-10 0z" fill="#1683d8" /> },
  { name: 'Files', icon: <><path d="M1 2h5l1 2h8v10H1z" fill="#f7d774" /><path d="M3 9h10v5h-2v-2H5v2H3z" fill="#3f9ad8" /></> },
  { name: 'Store', icon: <><path d="M1 4h14v11H1zM5 4V1h6v3" fill="#fff" stroke="#fff" /><path d="M4 6h4v4H4z" fill="#e8522c" /><path d="M8 6h4v4H8z" fill="#7ab929" /><path d="M4 10h4v4H4z" fill="#1c9fe0" /><path d="M8 10h4v4H8z" fill="#f8b814" /></> },
  { name: 'Gifts', icon: <><path d="M1 1h14v14H1z" fill="#fff" /><path d="M1 5h14v3H1zM2 9h12v6H2z" fill="#cf1f2e" /><path d="M6 5v10M10 5v10" stroke="#fff" /><path d="M4 4l2-3 2 3 2-3 2 3" stroke="#cf1f2e" strokeWidth="1.5" fill="none" /></> },
  { name: 'Mail', icon: <><path d="M1 6l7-4 7 4v8H1z" fill="#fff" /><path d="M1 6h14l-7 5z" fill="#222" /></> },
  { name: 'Chrome', icon: <><circle cx="8" cy="8" r="7" fill="#f7cb2d" /><path d="M8 8L2 4.5a7 7 0 0 1 12 0z" fill="#dc4437" /><path d="M8 8L2 4.5A7 7 0 0 0 7 15z" fill="#1fa15d" /><circle cx="8" cy="8" r="3.2" fill="#4787ef" stroke="#fff" /></> },
  { name: 'AutoCAD', icon: <Letter ch="A" bg="#f2f2f2" fg="#b8162b" /> },
  { name: 'Word', icon: <><path d="M7 2h8v12H7z" fill="#fff" /><path d="M9 5h5M9 8h5M9 11h5" stroke="#2b579a" /><path d="M1 2l9-1v14l-9-1z" fill="#2b579a" /><text x="5.5" y="11" textAnchor="middle" fontSize="8" fontWeight="bold" fill="#fff">W</text></> },
  { name: 'Revit', icon: <Letter ch="R" bg="#e9f1f8" fg="#1d5a9e" />, active: true },
]

const Taskbar = () => (
  <footer className="flex h-[14px] shrink-0 items-center bg-linear-to-r from-[#0a0a0a] via-[#1c0812] to-[#05080f] text-[5px] text-white">
    <div className="grid h-full w-[244px] shrink-0 grid-cols-12">
      {apps.map((app) => (
        <button
          key={app.name}
          aria-label={app.name}
          className={clsx('flex items-center justify-center pt-[2px]', app.active && 'bg-[#3c4146]')}
        >
          <Small className={clsx(['Start', 'Search', 'Task view'].includes(app.name) ? 'w-[8px] h-[8px]' : 'w-[10px] h-[10px]')}>{app.icon}</Small>
        </button>
      ))}
    </div>
    <div className="mr-[9px] ml-auto flex items-center gap-[3px]">
      <Small className="w-[7px] h-[7px]"><circle cx="9" cy="4" r="3" fill="none" stroke="#ddd" strokeWidth="1.5" /><path d="M2 15c0-6 6-8 10-5M12 5l3 4" fill="none" stroke="#ddd" strokeWidth="1.5" /></Small>
      <Small className="ml-[4px] w-[7px] h-[7px]"><path d="M2 11l6-6 6 6" fill="none" stroke="#ddd" strokeWidth="2" /></Small>
      <Small className="w-[7px] h-[7px]"><path d="M1 5h12v7H1zM14 7h2v3h-2zM2 2v4" fill="#ddd" stroke="#ddd" /></Small>
      <Small className="w-[7px] h-[7px]"><path d="M2 14L14 2v12z" fill="#888" stroke="#ddd" /></Small>
      <Small className="w-[7px] h-[7px]"><path d="M1 6h3l4-4v12l-4-4H1zM11 5c2 2 2 4 0 6M13 3c3 3 3 7 0 10" fill="none" stroke="#ddd" strokeWidth="1.5" /></Small>
      <span className="ml-px">ENG</span>
      <span className="w-[30px] text-center leading-[7px]">
        <span className="block">2:44 AM</span>
        <span className="block">7/2/2019</span>
      </span>
      <Small className="w-[9px] h-[8px]"><path d="M1 2h14v10h-4l-3 3-3-3H1z" fill="none" stroke="#ddd" strokeWidth="1.5" /></Small>
    </div>
  </footer>
)

export default function App() {
  return (
    <div className="relative flex h-screen flex-col overflow-hidden bg-[#e0e1e3] font-['Liberation_Sans',Arial,sans-serif]">
      <TitleBar />
      <Ribbon />
      <div className="mt-[11px] flex min-h-0 flex-1">
        <aside className="flex w-[120px] shrink-0 flex-col gap-px border-r border-[#d0d0d0] text-[5px] leading-[6px] text-[#222]">
          <Properties />
          <ProjectBrowser />
        </aside>
        <span className="w-[2px] shrink-0 bg-[#f0f0f0]" />
        <Canvas />
      </div>
      <StatusBar />
      <Taskbar />
      <button
        aria-label="Application menu"
        className="absolute top-0 left-0 flex h-[14px] w-[17px] items-center justify-center gap-px rounded-br-sm border-r border-b border-[#777] bg-[#b9c0c8] text-[14px] leading-[12px] font-bold text-[#1d5a9e]"
      >
        R<Caret />
      </button>
    </div>
  )
}
